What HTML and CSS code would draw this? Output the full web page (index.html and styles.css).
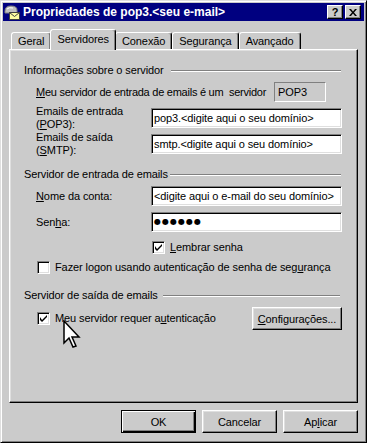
FILE: index.html
```html
<!DOCTYPE html>
<html lang="pt">
<head>
    <meta charset="UTF-8">
    <title>Propriedades de pop3</title>
    <link rel="stylesheet" href="styles.css">
</head>
<body>
<div class="window">
    <div class="titlebar">
        <svg class="app-icon" width="16" height="16" viewBox="0 0 16 16">
            <path d="M1 7 Q1 2 7 2 Q13 2 13 6 L13 9 L1 9 Z" fill="#c0c0c0" stroke="#808080"/>
            <path d="M3 5 Q5 3 9 4" fill="none" stroke="#fff"/>
            <rect x="5.5" y="8.5" width="10" height="7" fill="#ffffa0" stroke="#404040"/>
            <path d="M5.5 8.5 L10.5 12.5 L15.5 8.5" fill="none" stroke="#404040"/>
        </svg>
        <span class="title">Propriedades de pop3.&lt;seu e-mail&gt;</span>
        <div class="title-btns">
            <span class="tbtn">?</span>
            <span class="tbtn">
                <svg width="8" height="7" viewBox="0 0 8 7">
                    <path d="M0 0 L2 0 L4 2.5 L6 0 L8 0 L5 3.5 L8 7 L6 7 L4 4.5 L2 7 L0 7 L3 3.5 Z" fill="#000"/>
                </svg>
            </span>
        </div>
    </div>

    <div class="content">
        <div class="tabs">
            <div class="tab">Geral</div>
            <div class="tab active">Servidores</div>
            <div class="tab">Conexão</div>
            <div class="tab">Segurança</div>
            <div class="tab">Avançado</div>
        </div>

        <div class="panel">
            <div class="group-title"><span>Informações sobre o servidor</span><i class="rule"></i></div>
            <div class="group">
                <div class="row first">
                    <span class="label-wide"><u>M</u>eu servidor de entrada de emails é um&nbsp; servidor</span>
                    <span class="field readonly">POP3</span>
                </div>
                <div class="row tall">
                    <span class="label">Emails de entrada<br>(<u>P</u>OP3):</span>
                    <span class="field">pop3.&lt;digite aqui o seu domínio&gt;</span>
                </div>
                <div class="row tall">
                    <span class="label">Emails de saída<br>(<u>S</u>MTP):</span>
                    <span class="field">smtp.&lt;digite aqui o seu domínio&gt;</span>
                </div>
            </div>

            <div class="group-title second"><span>Servidor de entrada de emails</span><i class="rule"></i></div>
            <div class="group">
                <div class="row first">
                    <span class="label"><u>N</u>ome da conta:</span>
                    <span class="field">&lt;digite aqui o e-mail do seu domínio&gt;</span>
                </div>
                <div class="row pass">
                    <span class="label">Sen<u>h</u>a:</span>
                    <span class="field dots">●●●●●●</span>
                </div>
                <div class="check remember">
                    <span class="box"><svg width="7" height="7" viewBox="0 0 7 7"><path d="M0 2 L0 5 L2 7 L7 2 L7 0 L2 5 Z" fill="#000"/></svg></span>
                    <span><u>L</u>embrar senha</span>
                </div>
                <div class="check logon">
                    <span class="box"></span>
                    <span>Fazer logon usando autenticação de senha de seg<u>u</u>rança</span>
                </div>
            </div>

            <div class="group-title third"><span>Servidor de saída de emails</span><i class="rule"></i></div>
            <div class="group">
                <div class="row auth">
                    <div class="check">
                        <span class="box"><svg width="7" height="7" viewBox="0 0 7 7"><path d="M0 2 L0 5 L2 7 L7 2 L7 0 L2 5 Z" fill="#000"/></svg></span>
                        <span>Meu servidor requer a<u>u</u>tenticação</span>
                    </div>
                    <span class="btn settings"><u>C</u>onfigurações...</span>
                </div>
            </div>
        </div>

        <div class="actions">
            <span class="btn default">OK</span>
            <span class="btn">Cancelar</span>
            <span class="btn">Ap<u>l</u>icar</span>
        </div>
    </div>

    <svg class="cursor" width="18" height="28" viewBox="0 0 18 28">
        <path d="M1 1 L1 23 L6 18 L10 27 L13 26 L9 17 L16 17 Z" fill="#fff" stroke="#000" stroke-width="1.5" stroke-linejoin="miter"/>
    </svg>
</div>
</body>
</html>
```

FILE: styles.css
```css
*{
    margin: 0;
    padding: 0;
    box-sizing: border-box;
}
body{
    background: #cbcbcb;
    font-family: "Liberation Sans", Arial, sans-serif;
    font-size: 11px;
    letter-spacing: -0.1px;
    color: #000;
}
u{
    text-decoration: underline;
    text-underline-offset: 1px;
}

/* window frame */
.window{
    position: relative;
    width: 367px;
    height: 443px;
    background: #cbcbcb;
    border: 1px solid;
    border-color: #dfdfdf #000 #000 #dfdfdf;
    box-shadow: inset 1px 1px #fff, inset -1px -1px #808080;
    padding: 2px;
    display: flex;
    flex-direction: column;
}
.titlebar{
    height: 18px;
    background: #000080;
    display: flex;
    align-items: center;
    padding: 0 3px 0 1px;
}
.app-icon{
    flex: none;
}
.title{
    margin-left: 3px;
    color: #fff;
    font-weight: bold;
    font-size: 12px;
    letter-spacing: 0;
    flex: 1;
}
.title-btns{
    display: flex;
    gap: 2px;
}
.tbtn{
    width: 16px;
    height: 14px;
    background: #cbcbcb;
    border: 1px solid;
    border-color: #fff #000 #000 #fff;
    box-shadow: inset -1px -1px #808080;
    display: flex;
    align-items: center;
    justify-content: center;
    font-weight: bold;
    font-size: 11px;
    line-height: 12px;
}

.content{
    flex: 1;
    display: flex;
    flex-direction: column;
    padding: 8px 6px 7px;
}

/* tabs */
.tabs{
    display: flex;
    align-items: flex-end;
    height: 20px;
    padding-left: 2px;
    position: relative;
    z-index: 1;
}
.tab{
    height: 17px;
    padding: 1px 6px 0 6px;
    border: 1px solid;
    border-bottom: none;
    border-color: #fff #000 transparent #fff;
    border-radius: 3px 3px 0 0;
    box-shadow: inset -1px 0 #808080;
    background: #cbcbcb;
    line-height: 14px;
}
.tab.active{
    height: 21px;
    margin: 0 -1px -1px -1px;
    padding: 2px 6px 0 6px;
    position: relative;
    z-index: 2;
}

.panel{
    flex: 1;
    border: 1px solid;
    border-color: #fff #000 #000 #fff;
    box-shadow: inset -1px -1px #808080, inset 1px 1px #dfdfdf;
    padding: 14px 15px 0 14px;
}

/* groups */
.group-title{
    display: flex;
    align-items: center;
    height: 13px;
    line-height: 13px;
}
.group-title.second{
    margin-top: 11px;
}
.group-title.third{
    margin-top: 15px;
}
.rule{
    flex: 1;
    height: 2px;
    border-top: 1px solid #808080;
    border-bottom: 1px solid #fff;
    margin: 0 1px 0 7px;
}
.second .rule{
    margin-left: 2px;
}
.third .rule{
    margin-left: 5px;
    margin-right: 2px;
}
.group{
    padding-left: 12px;
}

.row{
    display: flex;
    align-items: center;
    margin-top: 6px;
}
.row.first{
    margin-top: 5px;
}
.row.tall{
    height: 26px;
    margin-top: 3px;
}
.row.tall + .row.tall{
    margin-top: 0;
}
.label-wide{
    width: 238px;
    white-space: nowrap;
    letter-spacing: -0.25px;
}
.label{
    width: 115px;
    line-height: 13px;
}
.field{
    width: 191px;
    height: 20px;
    background: #fff;
    border: 1px solid;
    border-color: #808080 #fff #fff #808080;
    box-shadow: inset 1px 1px #000, inset -1px -1px #dfdfdf;
    padding-left: 2px;
    line-height: 18px;
    white-space: nowrap;
    overflow: hidden;
}
.field.readonly{
    width: 52px;
    background: #cbcbcb;
    box-shadow: none;
    padding-left: 3px;
}
.field.dots{
    font-family: "DejaVu Sans", sans-serif;
    font-size: 8px;
    letter-spacing: 1px;
    line-height: 17px;
}

/* checkboxes */
.check{
    display: flex;
    align-items: center;
    gap: 5px;
    height: 13px;
    line-height: 13px;
}
.check.remember{
    margin: 9px 0 0 116px;
}
.check.logon{
    margin-top: 7px;
    padding-left: 1px;
}
.box{
    width: 13px;
    height: 13px;
    flex: none;
    background: #fff;
    border: 1px solid;
    border-color: #808080 #fff #fff #808080;
    box-shadow: inset 1px 1px #000, inset -1px -1px #dfdfdf;
    display: flex;
    align-items: center;
    justify-content: center;
}
.row.auth{
    justify-content: space-between;
    margin-top: 5px;
    padding-left: 1px;
}

/* buttons */
.btn{
    display: flex;
    align-items: center;
    justify-content: center;
    height: 23px;
    background: #cbcbcb;
    border: 1px solid;
    border-color: #fff #000 #000 #fff;
    box-shadow: inset -1px -1px #808080, inset 1px 1px #dfdfdf;
}
.btn.settings{
    width: 90px;
}
.actions{
    display: flex;
    justify-content: flex-end;
    gap: 6px;
    margin-top: 7px;
}
.actions .btn{
    width: 75px;
}
.btn.default{
    border-color: #000;
    box-shadow: inset 1px 1px #fff, inset -1px -1px #000, inset -2px -2px #808080;
}

.cursor{
    position: absolute;
    left: 62px;
    top: 319px;
}
```
